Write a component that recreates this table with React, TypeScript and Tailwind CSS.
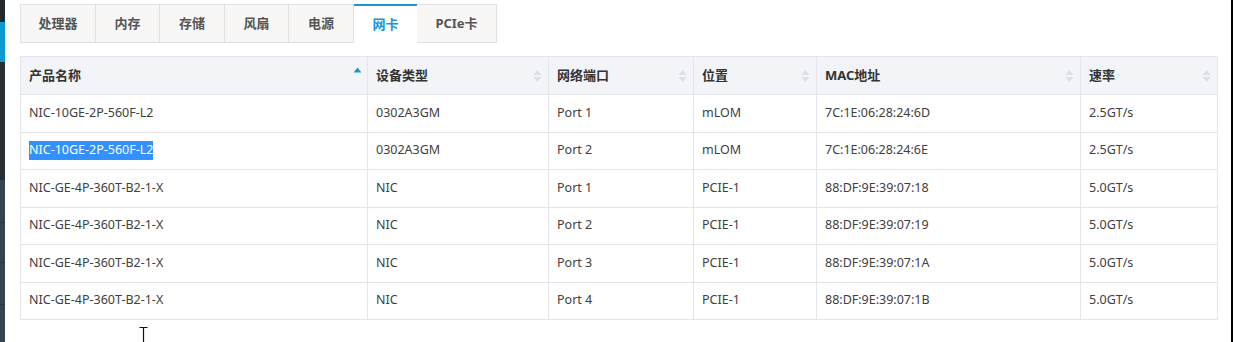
import React from "react";

const tabs = [
  { label: "处理器", w: "w-[76px]" },
  { label: "内存", w: "w-[64px]" },
  { label: "存储", w: "w-[65px]" },
  { label: "风扇", w: "w-[64px]" },
  { label: "电源", w: "w-[65px]" },
  { label: "网卡", w: "w-[63px]", active: true },
  { label: "PCIe卡", w: "w-[80px]" },
];

const cols = [
  { label: "产品名称", w: "w-[347px] shrink-0", sort: "asc" },
  { label: "设备类型", w: "w-[181px] shrink-0" },
  { label: "网络端口", w: "w-[145px] shrink-0" },
  { label: "位置", w: "w-[123px] shrink-0" },
  { label: "MAC地址", w: "w-[264px] shrink-0" },
  { label: "速率", w: "flex-1" },
];

const rows = [
  ["NIC-10GE-2P-560F-L2", "0302A3GM", "Port 1", "mLOM", "7C:1E:06:28:24:6D", "2.5GT/s"],
  ["NIC-10GE-2P-560F-L2", "0302A3GM", "Port 2", "mLOM", "7C:1E:06:28:24:6E", "2.5GT/s"],
  ["NIC-GE-4P-360T-B2-1-X", "NIC", "Port 1", "PCIE-1", "88:DF:9E:39:07:18", "5.0GT/s"],
  ["NIC-GE-4P-360T-B2-1-X", "NIC", "Port 2", "PCIE-1", "88:DF:9E:39:07:19", "5.0GT/s"],
  ["NIC-GE-4P-360T-B2-1-X", "NIC", "Port 3", "PCIE-1", "88:DF:9E:39:07:1A", "5.0GT/s"],
  ["NIC-GE-4P-360T-B2-1-X", "NIC", "Port 4", "PCIE-1", "88:DF:9E:39:07:1B", "5.0GT/s"],
];

function SortIcon({ active }: { active?: boolean }) {
  if (active) {
    return (
      <svg width="9" height="12" viewBox="0 0 9 12" className="absolute right-[5px] top-[10px]">
        <path d="M0.5 5.5 L4.5 0.5 L8.5 5.5 Z" fill="#1a96d4" />
      </svg>
    );
  }
  return (
    <svg width="9" height="14" viewBox="0 0 9 14" className="absolute right-[6px] top-[12px]">
      <path d="M0.5 6 L4.5 1 L8.5 6 Z" fill="#dcdfe3" />
      <path d="M0.5 8 L4.5 13 L8.5 8 Z" fill="#dcdfe3" />
    </svg>
  );
}

export default function App() {
  return (
    <div
      className="relative flex h-[342px] w-[1233px] overflow-hidden bg-white"
      style={{ fontFamily: '"Noto Sans", "Noto Sans CJK SC", sans-serif' }}
    >
      {/* left sidebar edge */}
      <div className="flex w-[5px] shrink-0 flex-col">
        <div className="h-[22px] bg-[#222a31]" />
        <div className="h-[40px] bg-[#0d9ad3]" />
        <div className="h-[118px] bg-[#262e36]" />
        <div className="h-[43px] border-b border-[#2a333b] bg-[#37434d]" />
        <div className="h-[40px] border-b border-[#2a333b] bg-[#37434d]" />
        <div className="h-[42px] border-b border-[#2a333b] bg-[#37434d]" />
        <div className="flex-1 bg-[#37434d]" />
      </div>

      {/* main */}
      <div className="flex-1 pl-[15px] pt-[4px]">
        {/* tabs */}
        <div className="flex h-[39px]">
          {tabs.map((t, i) => (
            <div
              key={t.label}
              className={
                t.active
                  ? `${t.w} flex items-center justify-center border-t-2 border-t-[#1a96d4] bg-white text-[13px] font-bold text-[#1a96d4]`
                  : `${t.w} flex items-center justify-center border border-[#e0e0e0] bg-[#f8f7f6] text-[13px] font-bold text-[#555] ${i > 0 ? "border-l-0" : ""}`
              }
            >
              {t.label}
            </div>
          ))}
        </div>

        {/* table */}
        <div className="mt-[13px] w-[1198px] border border-[#e2e5e9] text-[12.5px] text-[#404040]">
          <div className="flex h-[37px] bg-[#f2f4f7] text-[13px] font-bold text-[#333]">
            {cols.map((c, i) => (
              <div
                key={c.label}
                className={`${c.w} relative flex items-center pl-[8px] ${i < cols.length - 1 ? "border-r border-[#e2e5e9]" : ""}`}
              >
                {c.label}
                <SortIcon active={c.sort === "asc"} />
              </div>
            ))}
          </div>
          {rows.map((r, ri) => (
            <div key={ri} className="flex h-[37.5px] border-t border-[#e2e5e9]">
              {r.map((v, ci) => (
                <div
                  key={ci}
                  className={`${cols[ci].w} flex items-center pl-[8px] ${ci < r.length - 1 ? "border-r border-[#e2e5e9]" : ""}`}
                >
                  {ri === 1 && ci === 0 ? (
                    <span className="bg-[#3390ff] text-white">{v}</span>
                  ) : (
                    v
                  )}
                </div>
              ))}
            </div>
          ))}
        </div>
      </div>

      {/* right black edge */}
      <div className="w-[2px] shrink-0 bg-black" />

      {/* text cursor (I-beam) */}
      <svg width="9" height="16" viewBox="0 0 9 16" className="absolute left-[139px] top-[327px]">
        <path d="M0.5 0.5 H8.5 M4.5 0.5 V15.5" stroke="#111" strokeWidth="1.2" fill="none" />
      </svg>
    </div>
  );
}
